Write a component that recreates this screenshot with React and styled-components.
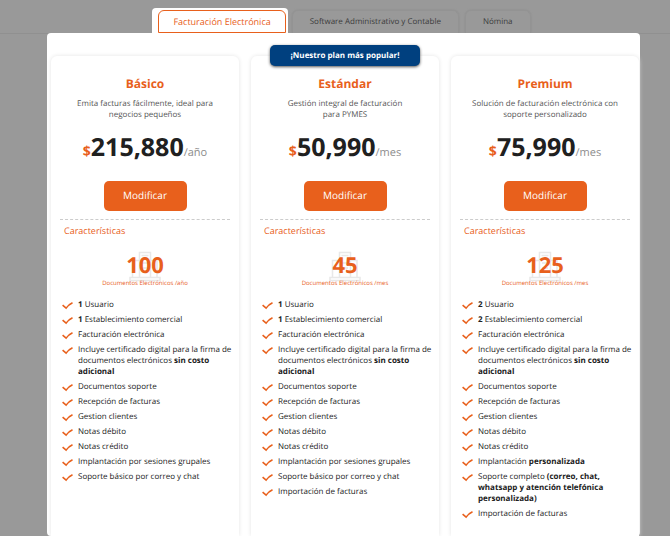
import React from "react";
import styled, { createGlobalStyle, css } from "styled-components";

const Global = createGlobalStyle`
  * { box-sizing: border-box; }
  body { margin: 0; background: #999; font-family: "Open Sans", "Noto Sans", sans-serif; color: #212121; text-rendering: geometricPrecision; }
  h1, h2, h3, p, ul { margin: 0; padding: 0; }
  ul { list-style: none; }
  button { text-rendering: inherit; }
`;

const Page = styled.div`
  min-height: 100vh;
  display: flex;
  flex-direction: column;
`;
const Top = styled.header`
  display: grid;
  grid-template-rows: 33px;
  border-bottom: 1px solid #909090;
  margin-bottom: -1px;
  overflow: hidden;
`;
const Tabs = styled.nav`
  grid-area: 1 / 1;
  display: flex;
  justify-content: center;
  align-items: flex-end;
  gap: 4px;
  padding-left: 15px;
`;
const Intro = styled.h1`
  grid-area: 1 / 1;
  margin-top: -14px;
  padding-left: 36px;
  font-size: 11px;
  line-height: 16px;
  font-weight: 400;
  color: #333;
`;
const TabFrame = styled.div`
  padding: 0 2px 0 0;
  ${(p) => p.$active && css`
    padding: 2px 2px 0 6px;
    border-radius: 4px 4px 0 0;
    background: #fff;
  `}
`;
const Tab = styled.button`
  display: block;
  height: 23px;
  padding: 0 17px;
  border: 1px solid #939393;
  border-bottom: 0;
  border-radius: 6px 6px 0 0;
  background: transparent;
  color: #3c3c3c;
  font: 400 8px/20px "Open Sans", sans-serif;
  white-space: nowrap;
  box-shadow: 0 0 2px #8b8b8b;
  ${(p) => p.$active && css`
    padding: 0 14px;
    border: 1px solid #e8601c;
    color: #e8601c;
    background: #fff;
    font-size: 9px;
    box-shadow: none;
  `}
`;
const Panel = styled.main`
  flex: 1 0 auto;
  margin: 0 30px 0 47px;
  padding: 23px 1px 0 4px;
  border-radius: 4px;
  background: #fff;
  position: relative;
  display: grid;
  grid-template-columns: repeat(3, minmax(0, 1fr));
  gap: 12px;
`;
const Card = styled.section`
  position: relative;
  padding: 20px 9px 0;
  border-radius: 6px 6px 0 0;
  background: #fff;
  box-shadow: 0 0 4px #e4e4e4;
  display: flex;
  flex-direction: column;
  align-items: stretch;
  text-align: center;
`;
const Ribbon = styled.strong`
  position: absolute;
  top: -11px;
  left: 50%;
  transform: translateX(-50%);
  width: 150px;
  border-radius: 5px;
  background: #00407f;
  color: #fff;
  font-size: 8px;
  line-height: 21px;
  box-shadow: 0 1px 3px #555;
`;
const Name = styled.h2`
  font-size: 12px;
  line-height: 16px;
  font-weight: 700;
  color: #e8601c;
`;
const Blurb = styled.p`
  min-height: 22px;
  margin-top: 6px;
  font-size: 8px;
  line-height: 11px;
  color: #555;
`;
const Price = styled.p`
  margin-top: 10px;
  line-height: 34px;
  font-size: 25px;
  font-weight: 700;
  color: #202020;
`;
const Currency = styled.span`
  font-size: 14px;
  color: #e8601c;
`;
const Period = styled.span`
  font-size: 11px;
  font-weight: 400;
  color: #8c8c8c;
`;
const Choose = styled.button`
  align-self: center;
  width: 83px;
  height: 30px;
  margin-top: 11px;
  padding: 0 0 2px;
  border: 0;
  border-radius: 5px;
  background: #e8601c;
  color: #fff;
  font: 400 10px/28px "Open Sans", sans-serif;
`;
const Features = styled.div`
  margin-top: 8px;
  border-top: 1px dashed #ccc;
`;
const Subtitle = styled.h3`
  padding: 5px 4px 0;
  text-align: left;
  font-size: 9px;
  line-height: 12px;
  font-weight: 400;
  color: #e8601c;
`;
const Quota = styled.div`
  display: grid;
  justify-items: center;
  margin-top: 14px;
  color: #e8601c;
`;
const QuotaIcon = styled.svg`
  grid-area: 1 / 1 / 3 / 2;
  width: 32px;
  height: 32px;
`;
const Amount = styled.strong`
  grid-area: 1 / 1;
  font-size: 22px;
  line-height: 28px;
`;
const QuotaLabel = styled.span`
  grid-area: 2 / 1;
  font-size: 6px;
  line-height: 8px;
`;
const List = styled.ul`
  display: grid;
  gap: 4px;
  margin-top: 12px;
  padding-left: 2px;
  text-align: left;
`;
const Item = styled.li`
  display: grid;
  grid-template-columns: 12px 156px;
  gap: 4px;
  font-size: 8px;
  line-height: 11px;
  color: #212121;
`;
const Tick = styled.svg`
  width: 12px;
  height: 11px;
`;

const Check = () => (
  <Tick viewBox="0 0 12 11" aria-hidden="true">
    <path d="M.6 6.1 4.1 9.1Q6.500 5.700 10.500 3.800" fill="none" stroke="#e8601c" strokeWidth="1.6" />
  </Tick>
);

const Building = () => (
  <QuotaIcon viewBox="0 0 32 32" fill="none" stroke="#e8e8e8" strokeWidth="1.5" aria-hidden="true">
    <path d="M10.5 26V1.5h11V26M12.500 4.500h7M3.500 26V9.500h7M22 9.500h6V26M13 12h6M13 17h6M1 26.500h30v3H1z" />
  </QuotaIcon>
);

const certificate = <>Incluye certificado digital para la firma de<br />documentos electrónicos <b>sin costo<br />adicional</b></>;
const shared = ["Facturación electrónica", certificate, "Documentos soporte", "Recepción de facturas", "Gestion clientes", "Notas débito", "Notas crédito"];
const basics = (n) => [<><b>{n}</b> Usuario</>, <><b>{n}</b> Establecimiento comercial</>, ...shared];
const support = ["Implantación por sesiones grupales", "Soporte básico por correo y chat"];

const plans = [
  { name: "Básico", blurb: <>Emita facturas fácilmente, ideal para<br />negocios pequeños</>, price: "215,880", period: "/año", docs: 100, items: [...basics(1), ...support] },
  { name: "Estándar", popular: true, blurb: <>Gestión integral de facturación<br />para PYMES</>, price: "50,990", period: "/mes", docs: 45, items: [...basics(1), ...support, "Importación de facturas"] },
  {
    name: "Premium", blurb: <>Solución de facturación electrónica con<br />soporte personalizado</>, price: "75,990", period: "/mes", docs: 125,
    items: [...basics(2), <>Implantación <b>personalizada</b></>, <>Soporte completo <b>(correo, chat,<br />whatsapp y atención telefónica<br />personalizada)</b></>, "Importación de facturas"],
  },
];

const Plan = ({ plan }) => (
  <Card>
    {plan.popular && <Ribbon>¡Nuestro plan más popular!</Ribbon>}
    <Name>{plan.name}</Name>
    <Blurb>{plan.blurb}</Blurb>
    <Price><Currency>$</Currency>{plan.price}<Period>{plan.period}</Period></Price>
    <Choose type="button">Modificar</Choose>
    <Features>
      <Subtitle>Características</Subtitle>
      <Quota>
        <Building />
        <Amount>{plan.docs}</Amount>
        <QuotaLabel>Documentos Electrónicos {plan.period}</QuotaLabel>
      </Quota>
      <List>
        {plan.items.map((item, i) => <Item key={i}><Check /><span>{item}</span></Item>)}
      </List>
    </Features>
  </Card>
);

export default function App() {
  return (
    <Page>
      <Global />
      <Top>
        <Intro>Tu plan seguro</Intro>
        <Tabs>
          <TabFrame $active><Tab $active type="button">Facturación Electrónica</Tab></TabFrame>
          <TabFrame><Tab type="button">Software Administrativo y Contable</Tab></TabFrame>
          <TabFrame><Tab type="button">Nómina</Tab></TabFrame>
        </Tabs>
      </Top>
      <Panel>{plans.map((plan) => <Plan key={plan.name} plan={plan} />)}</Panel>
    </Page>
  );
}
